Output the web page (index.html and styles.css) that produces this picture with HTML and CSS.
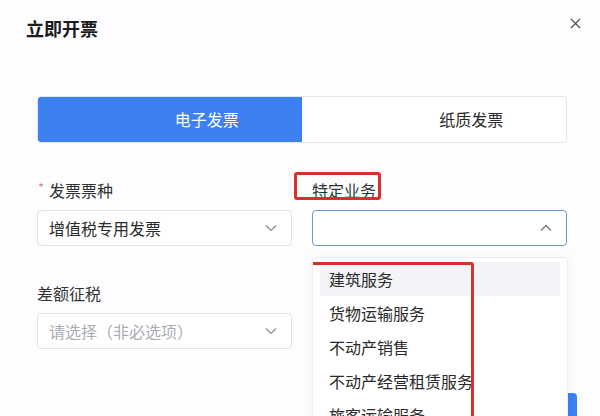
FILE: index.html
```html
<!DOCTYPE html>
<html lang="zh-CN">
<head>
<meta charset="utf-8">
<link rel="stylesheet" href="styles.css">
</head>
<body>
<div class="dialog">
  <div class="header">
    <div class="title">立即开票</div>
    <svg class="close" width="11" height="11" viewBox="0 0 11 11"><path d="M1 1L10 10M10 1L1 10" stroke="#555" stroke-width="1.3" fill="none"/></svg>
  </div>
  <div class="content">
    <div class="tabs">
      <div class="tab active">电子发票</div>
      <div class="tab">纸质发票</div>
    </div>
    <div class="grid">
      <div class="field">
        <div class="label"><span class="star">*</span>发票票种</div>
        <div class="select">
          <span class="value">增值税专用发票</span>
          <svg class="chev" width="12" height="8" viewBox="0 0 12 8"><path d="M1 1.5L6 6.5L11 1.5" stroke="#8a8f99" stroke-width="1.2" fill="none"/></svg>
        </div>
      </div>
      <div class="field">
        <div class="label plain">特定业务<span class="mark mark-label"></span></div>
        <div class="select focus">
          <span class="value"></span>
          <svg class="chev" width="12" height="8" viewBox="0 0 12 8"><path d="M1 6.5L6 1.5L11 6.5" stroke="#6c7380" stroke-width="1.3" fill="none"/></svg>
        </div>
        <div class="dropdown">
          <div class="opt hover">建筑服务</div>
          <div class="opt">货物运输服务</div>
          <div class="opt">不动产销售</div>
          <div class="opt">不动产经营租赁服务</div>
          <div class="opt">旅客运输服务</div>
          <span class="mark mark-list"></span>
        </div>
      </div>
      <div class="field second">
        <div class="label plain">差额征税</div>
        <div class="select">
          <span class="placeholder">请选择（非必选项）</span>
          <svg class="chev" width="12" height="8" viewBox="0 0 12 8"><path d="M1 1.5L6 6.5L11 1.5" stroke="#8a8f99" stroke-width="1.2" fill="none"/></svg>
        </div>
      </div>
    </div>
  </div>
  <div class="footer">
    <div class="btn"></div>
  </div>
</div>
</body>
</html>
```
FILE: styles.css
```css
* { box-sizing: border-box; }
html, body { margin: 0; padding: 0; }
body {
  width: 600px;
  height: 416px;
  overflow: hidden;
  background: #fdfdff;
  font-family: "Noto Sans CJK SC", "Noto Sans", sans-serif;
  color: #333;
}
.dialog { position: relative; height: 416px; overflow: hidden; }
.header {
  display: flex;
  justify-content: space-between;
  align-items: flex-start;
  padding: 15px 19px 0 26px;
  height: 96px;
}
.title {
  font-size: 18px;
  font-weight: 700;
  line-height: 26px;
  color: #1c1c1c;
}
.close { margin-top: 3px; }
.content { padding: 0 33px 0 37px; }
.tabs {
  display: flex;
  height: 47px;
  border: 1px solid #e3e6ec;
  border-radius: 4px;
  overflow: hidden;
  background: #fff;
}
.tab {
  flex: 1;
  font-size: 16px;
  line-height: 45px;
  padding-left: 75px;
  text-align: center;
  color: #2a2a2a;
}
.tab.active { background: #3c80f2; color: #fff; margin: -1px 0 -1px -1px; line-height: 47px; border-radius: 4px 0 0 4px; }
.grid {
  display: grid;
  grid-template-columns: 255px 255px;
  column-gap: 20px;
  padding-top: 35px;
}
.field { position: relative; }
.field.second { padding-top: 35px; }
.label {
  position: relative;
  font-size: 16px;
  line-height: 24px;
  height: 24px;
  margin-bottom: 8px;
  color: #333;
  padding-left: 12px;
}
.label.plain { padding-left: 0; }
.star {
  position: absolute;
  left: 1px;
  top: -2px;
  color: #e2868a;
  font-size: 13px;
}
.select {
  display: flex;
  align-items: center;
  justify-content: space-between;
  height: 36px;
  border: 1px solid #e0e3e9;
  border-radius: 4px;
  background: #fff;
  padding: 0 14px 0 11px;
  font-size: 16px;
  color: #2a2a2a;
}
.select.focus { border-color: #6f96cc; }
.placeholder { color: #a9adb5; }
.dropdown {
  position: absolute;
  left: 0;
  right: -1px;
  top: 79px;
  z-index: 2;
  background: #fff;
  border: 1px solid #eceef2;
  border-bottom: 0;
  border-radius: 4px 4px 0 0;
  box-shadow: 0 2px 10px rgba(0,0,0,0.06);
  padding: 4px 7px 0 7px;
  height: 159px;
  overflow: hidden;
}
.opt {
  height: 34px;
  line-height: 34px;
  font-size: 16px;
  color: #2a2a2a;
  padding-left: 9px;
  white-space: nowrap;
}
.opt.hover { background: #f3f4f7; }
.mark {
  position: absolute;
  border: 3px solid #d8312b;
  border-radius: 3px;
  pointer-events: none;
}
.mark-label { left: -18px; top: -6px; width: 87px; height: 28px; }
.mark-list { left: -13px; top: 4px; width: 174px; height: 220px; z-index: 3; }
.footer {
  position: absolute;
  right: 23px;
  top: 393px;
}
.btn {
  width: 90px;
  height: 23px;
  background: #3c80f2;
  border-radius: 4px 4px 0 0;
}
```
